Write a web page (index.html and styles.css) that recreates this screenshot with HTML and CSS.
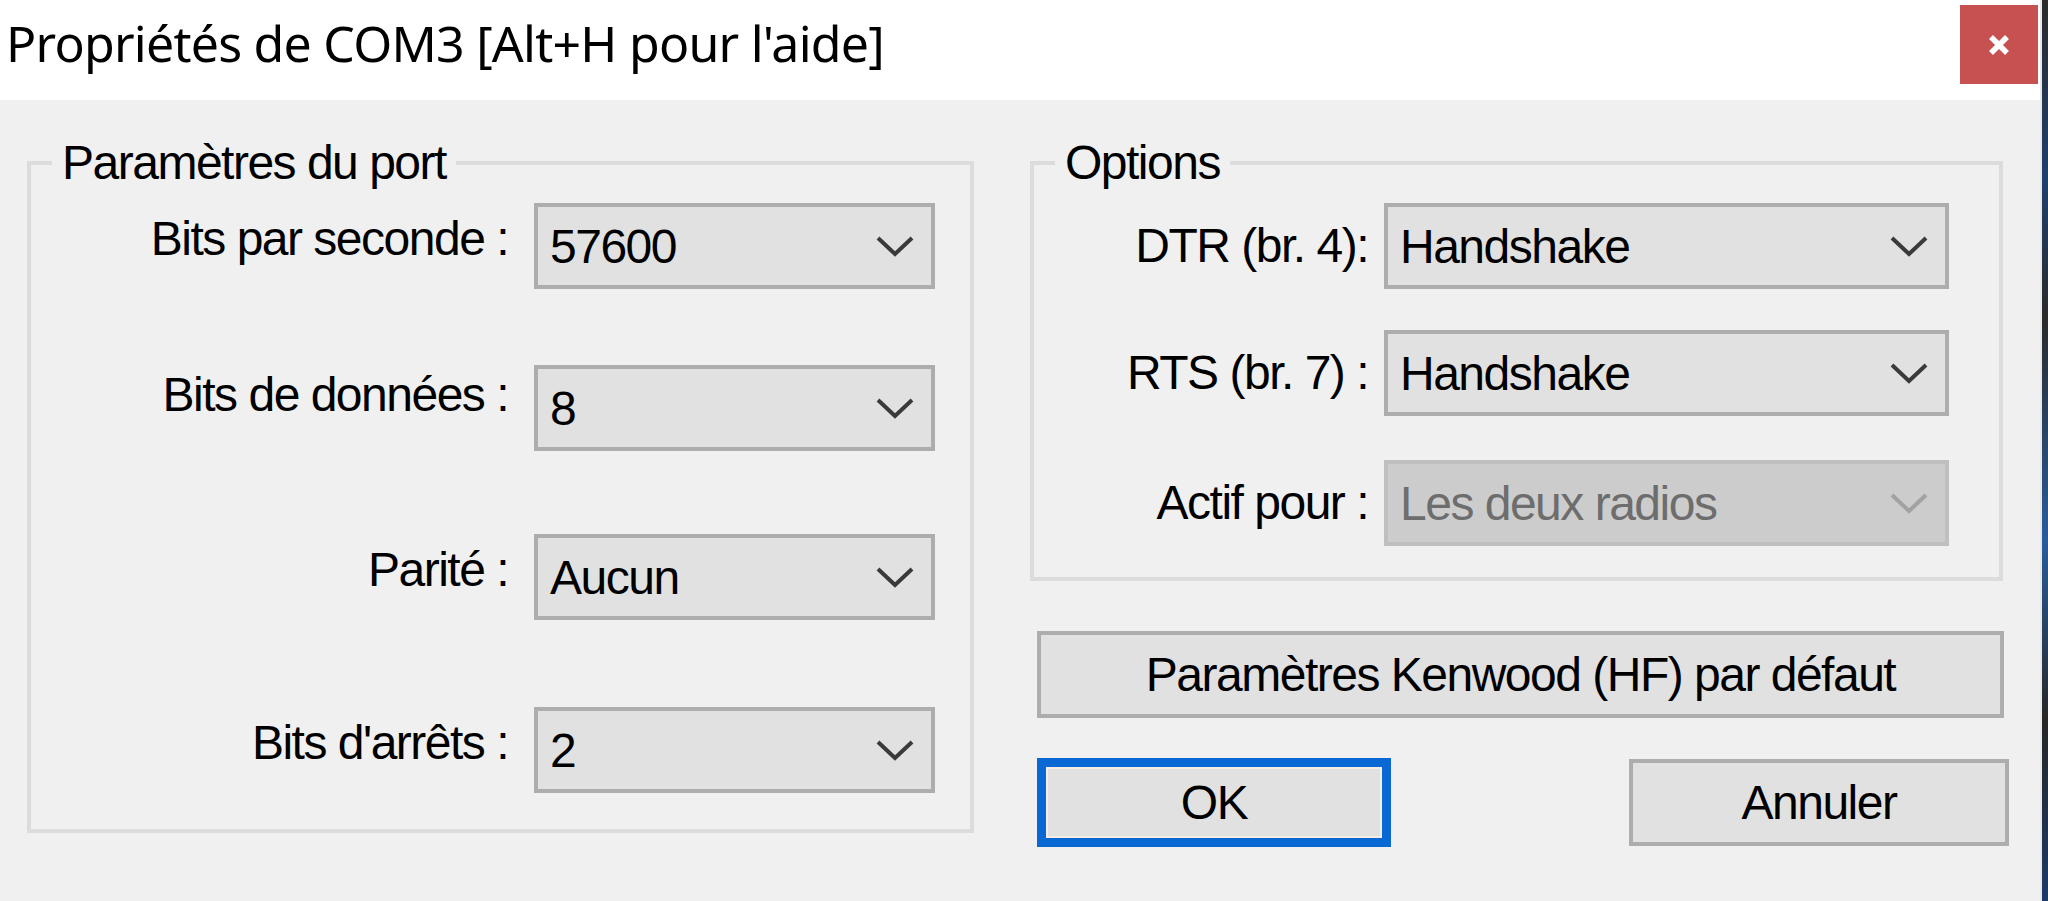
FILE: index.html
```html
<!doctype html>
<html lang="fr">
<head>
	<meta charset="utf-8">
	<title>Propriétés de COM3</title>
	<link rel="stylesheet" href="styles.css">
</head>
<body>

	<div class="screen">
		<div class="window">

			<div class="titlebar">
				<span class="title">Propriétés de COM3 [Alt+H pour l'aide]</span>
				<button class="close" title="Fermer">
					<svg width="26" height="26" viewBox="0 0 26 26">
						<path d="M5 5 L21 21 M21 5 L5 21" stroke="#fff" stroke-width="5.5" fill="none"/>
					</svg>
				</button>
			</div>

			<div class="dialog">

				<!-- Paramètres du port -->
				<fieldset class="group group-port">
					<legend>Paramètres du port</legend>

					<div class="row row-1">
						<label class="label">Bits par seconde :</label>
						<div class="combo"><span>57600</span><svg class="chevron" viewBox="0 0 40 22"><polyline points="3,3 20,19 37,3"/></svg></div>
					</div>
					<div class="row row-2">
						<label class="label label-high">Bits de données :</label>
						<div class="combo"><span>8</span><svg class="chevron" viewBox="0 0 40 22"><polyline points="3,3 20,19 37,3"/></svg></div>
					</div>
					<div class="row row-3">
						<label class="label">Parité :</label>
						<div class="combo"><span>Aucun</span><svg class="chevron" viewBox="0 0 40 22"><polyline points="3,3 20,19 37,3"/></svg></div>
					</div>
					<div class="row row-4">
						<label class="label">Bits d'arrêts :</label>
						<div class="combo"><span>2</span><svg class="chevron" viewBox="0 0 40 22"><polyline points="3,3 20,19 37,3"/></svg></div>
					</div>
				</fieldset>

				<div class="side">

					<!-- Options -->
					<fieldset class="group group-options">
						<legend>Options</legend>

						<div class="row row-dtr">
							<label class="label">DTR (br. 4):</label>
							<div class="combo"><span>Handshake</span><svg class="chevron" viewBox="0 0 40 22"><polyline points="3,3 20,19 37,3"/></svg></div>
						</div>
						<div class="row row-rts">
							<label class="label">RTS (br. 7) :</label>
							<div class="combo"><span>Handshake</span><svg class="chevron" viewBox="0 0 40 22"><polyline points="3,3 20,19 37,3"/></svg></div>
						</div>
						<div class="row row-actif">
							<label class="label">Actif pour :</label>
							<div class="combo disabled"><span>Les deux radios</span><svg class="chevron" viewBox="0 0 40 22"><polyline points="3,3 20,19 37,3"/></svg></div>
						</div>
					</fieldset>

					<button class="btn btn-kenwood">Paramètres Kenwood (HF) par défaut</button>

					<div class="actions">
						<button class="btn btn-ok">OK</button>
						<button class="btn btn-cancel">Annuler</button>
					</div>
				</div>

			</div>
		</div>
		<div class="desktop-edge"></div>
	</div>

</body>
</html>
```

FILE: styles.css
```css
html, body {
	margin: 0;
	padding: 0;
}
body {
	width: 2048px;
	height: 901px;
	overflow: hidden;
	font-family: "Liberation Sans", Arial, sans-serif;
	font-size: 48px;
	letter-spacing: -1.5px;
	color: #000;
	background: #f0f0f0;
}

.screen {
	display: flex;
	height: 901px;
}
.window {
	flex: 0 0 2040px;
	display: flex;
	flex-direction: column;
	background: #f0f0f0;
}
.desktop-edge {
	flex: 1;
	background: linear-gradient(to bottom, #2a2a2a 0%, #1f3f6e 20%, #2a2a2a 35%, #2b5c9a 60%, #262626 80%, #1d3a66 100%);
	border-left: 2px solid #e8e8e8;
}

/*****/

.titlebar {
	display: flex;
	align-items: flex-start;
	height: 100px;
	background: #fff;
	padding-right: 2px;
}
.title {
	flex: 1;
	font-family: "Noto Sans", "Open Sans", sans-serif;
	font-size: 50px;
	line-height: 60px;
	letter-spacing: -0.75px;
	padding: 13px 0 0 6px;
	white-space: nowrap;
}
.close {
	width: 78px;
	height: 79px;
	margin-top: 5px;
	border: 0;
	padding: 0;
	background: #c75050;
	display: flex;
	align-items: center;
	justify-content: center;
}

.dialog {
	display: flex;
	align-items: flex-start;
	padding: 37px 0 0 27px;
	gap: 56px;
}

/* group boxes */
.group {
	margin: 0;
	padding: 0 0 36px;
	border: 4px solid #dcdcdc;
	min-width: 0;
}
.group legend {
	margin-left: 21px;
	padding: 0 10px;
	line-height: 52px;
}
.group-port {
	width: 947px;
	box-sizing: border-box;
}
.group-options {
	width: 973px;
	box-sizing: border-box;
	padding-bottom: 31px;
}

.row {
	display: flex;
	align-items: center;
}
.label {
	text-align: right;
	line-height: 52px;
	padding-bottom: 14px;
	white-space: nowrap;
}
.label-high {
	padding-bottom: 26px;
}
.group-port .label {
	flex: 0 0 477px;
	margin-right: 26px;
}
.group-options .label {
	flex: 0 0 334px;
	margin-right: 16px;
	padding-bottom: 0;
}

.row-1 { margin-top: 14px; }
.row-2 { margin-top: 76px; }
.row-3 { margin-top: 83px; }
.row-4 { margin-top: 87px; }
.row-dtr { margin-top: 14px; }
.row-rts { margin-top: 41px; }
.row-actif { margin-top: 44px; }

/* combo boxes */
.combo {
	box-sizing: border-box;
	display: flex;
	align-items: center;
	justify-content: space-between;
	height: 86px;
	padding: 0 16px 0 12px;
	border: 4px solid #adadad;
	background: #e1e1e1;
	white-space: nowrap;
}
.group-port .combo {
	width: 401px;
}
.group-options .combo {
	width: 565px;
}
.chevron {
	width: 40px;
	height: 22px;
	fill: none;
	stroke: #3a3a3a;
	stroke-width: 4;
}
.combo.disabled {
	background: #cccccc;
	border-color: #bfbfbf;
	color: #6d6d6d;
}
.combo.disabled .chevron {
	stroke: #a2a2a2;
}

/* buttons */
.side {
	width: 979px;
}
.btn {
	font-family: inherit;
	font-size: 48px;
	letter-spacing: -1.5px;
	color: #000;
	background: #e1e1e1;
	border: 4px solid #adadad;
	padding: 0;
	box-sizing: border-box;
}
.btn-kenwood {
	display: block;
	width: 967px;
	height: 87px;
	margin: 50px 0 0 7px;
}
.actions {
	display: flex;
	align-items: center;
	justify-content: space-between;
	margin-top: 40px;
	padding-left: 7px;
}
.btn-ok {
	width: 354px;
	height: 89px;
	border: 9px solid #0a68d4;
	box-shadow: inset 0 0 0 2px #f6eee4;
}
.btn-cancel {
	width: 380px;
	height: 87px;
}
```
